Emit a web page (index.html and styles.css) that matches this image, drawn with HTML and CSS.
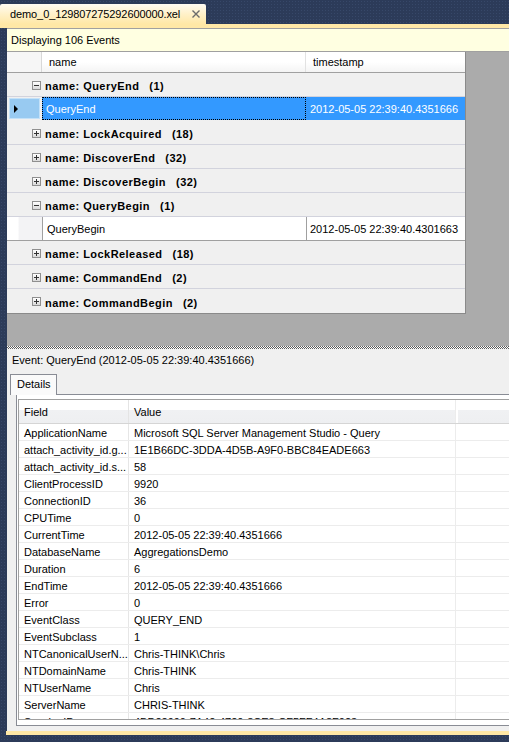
FILE: index.html
```html
<!DOCTYPE html>
<html>
<head>
<meta charset="utf-8">
<link rel="stylesheet" href="styles.css">
</head>
<body>
<div class="tabstrip">
  <div class="doctab">
    <span class="doctab-title">demo_0_129807275292600000.xel</span>
    <svg class="close" viewBox="0 0 8 8" width="8" height="8"><path d="M0.5 0.5 L7.5 7.5 M7.5 0.5 L0.5 7.5" stroke="#6b6b6b" stroke-width="1.4" fill="none"/></svg>
  </div>
</div>
<div class="accent"></div>
<div class="docwell">
  <div class="infobar">Displaying 106 Events</div>
  <div class="upper">
    <div class="eventgrid">
      <div class="ghead"><div class="rh"></div><div class="c-name">name</div><div class="c-ts">timestamp</div></div>
      <div class="group"><span class="exp"></span><span>name: QueryEnd</span><span class="count">(1)</span></div>
      <div class="drow selected"><div class="rh"><span class="rhbox"><span class="arrow"></span></span></div><div class="c-name">QueryEnd</div><div class="c-ts">2012-05-05 22:39:40.4351666</div></div>
      <div class="group"><span class="exp plus"></span><span>name: LockAcquired</span><span class="count">(18)</span></div>
      <div class="group"><span class="exp plus"></span><span>name: DiscoverEnd</span><span class="count">(32)</span></div>
      <div class="group"><span class="exp plus"></span><span>name: DiscoverBegin</span><span class="count">(32)</span></div>
      <div class="group"><span class="exp"></span><span>name: QueryBegin</span><span class="count">(1)</span></div>
      <div class="drow plain"><div class="rh"></div><div class="c-name">QueryBegin</div><div class="c-ts">2012-05-05 22:39:40.4301663</div></div>
      <div class="group"><span class="exp plus"></span><span>name: LockReleased</span><span class="count">(18)</span></div>
      <div class="group"><span class="exp plus"></span><span>name: CommandEnd</span><span class="count">(2)</span></div>
      <div class="group last"><span class="exp plus"></span><span>name: CommandBegin</span><span class="count">(2)</span></div>
    </div>
  </div>
  <div class="splitter"></div>
  <div class="lower">
    <div class="evtitle">Event: QueryEnd (2012-05-05 22:39:40.4351666)</div>
    <div class="tabs"><div class="tab">Details</div></div>
    <div class="tabpage">
      <div class="details">
        <div class="dhead"><div class="f">Field</div><div class="v">Value</div><div class="x"></div></div>
        <div class="dbody">
          <div class="drw"><div class="f">ApplicationName</div><div class="v">Microsoft SQL Server Management Studio - Query</div><div class="x"></div></div>
          <div class="drw"><div class="f">attach_activity_id.g...</div><div class="v">1E1B66DC-3DDA-4D5B-A9F0-BBC84EADE663</div><div class="x"></div></div>
          <div class="drw"><div class="f">attach_activity_id.s...</div><div class="v">58</div><div class="x"></div></div>
          <div class="drw"><div class="f">ClientProcessID</div><div class="v">9920</div><div class="x"></div></div>
          <div class="drw"><div class="f">ConnectionID</div><div class="v">36</div><div class="x"></div></div>
          <div class="drw"><div class="f">CPUTime</div><div class="v">0</div><div class="x"></div></div>
          <div class="drw"><div class="f">CurrentTime</div><div class="v">2012-05-05 22:39:40.4351666</div><div class="x"></div></div>
          <div class="drw"><div class="f">DatabaseName</div><div class="v">AggregationsDemo</div><div class="x"></div></div>
          <div class="drw"><div class="f">Duration</div><div class="v">6</div><div class="x"></div></div>
          <div class="drw"><div class="f">EndTime</div><div class="v">2012-05-05 22:39:40.4351666</div><div class="x"></div></div>
          <div class="drw"><div class="f">Error</div><div class="v">0</div><div class="x"></div></div>
          <div class="drw"><div class="f">EventClass</div><div class="v">QUERY_END</div><div class="x"></div></div>
          <div class="drw"><div class="f">EventSubclass</div><div class="v">1</div><div class="x"></div></div>
          <div class="drw"><div class="f">NTCanonicalUserN...</div><div class="v">Chris-THINK\Chris</div><div class="x"></div></div>
          <div class="drw"><div class="f">NTDomainName</div><div class="v">Chris-THINK</div><div class="x"></div></div>
          <div class="drw"><div class="f">NTUserName</div><div class="v">Chris</div><div class="x"></div></div>
          <div class="drw"><div class="f">ServerName</div><div class="v">CHRIS-THINK</div><div class="x"></div></div>
          <div class="drw"><div class="f">SessionID</div><div class="v">4BD22990-7A42-4720-8CE8-CF5FF4A8F023</div><div class="x"></div></div>
        </div>
      </div>
    </div>
  </div>
</div>
<div class="accent-bottom"></div>
</body>
</html>
```
FILE: styles.css
```css
* { box-sizing: border-box; }
html, body { margin: 0; padding: 0; }
body {
  width: 509px;
  height: 742px;
  overflow: hidden;
  background-color: #2c3b59;
  background-image: radial-gradient(circle, rgba(70, 90, 125, 0.45) 0.6px, transparent 0.8px);
  background-size: 3px 3px;
  font-family: "Liberation Sans", Arial, sans-serif;
  font-size: 11px;
  color: #000;
}

/* document tab */
.tabstrip { height: 24px; padding-top: 4px; }
.doctab {
  width: 206px;
  height: 20px;
  border-radius: 2px 2px 0 0;
  background: linear-gradient(#fffcf3, #fff1c9 50%, #ffe8a6);
  display: flex;
  align-items: center;
  padding-left: 10px;
  font-size: 11px;
  letter-spacing: -0.1px;
}
.doctab-title { flex: 1; }
.close { margin-right: 6px; }
.accent { height: 4px; background: #ffe8a6; }
.accent-bottom { height: 4px; margin-left: 6px; background: #ffe8a6; }

/* document well */
.docwell {
  margin-left: 7px;
  height: 703px;
  display: flex;
  flex-direction: column;
  border-top: 1px solid #a0a0a0;
}
.infobar {
  height: 23px;
  flex: none;
  background: #ffffe1;
  border-bottom: 1px solid #a0a0a0;
  padding-left: 4px;
  line-height: 23px;
}
.upper { height: 294px; flex: none; background: #ababab; }
.eventgrid {
  width: 459px;
  height: 262px;
  border-right: 1px solid #8a8a8a;
  border-bottom: 1px solid #8a8a8a;
  background: #ababab;
}
.ghead {
  display: flex;
  height: 21px;
  background: linear-gradient(#ffffff, #ffffff 50%, #f4f4f4);
  border-bottom: 1px solid #a0a0a0;
  line-height: 20px;
}
.ghead .rh { width: 35px; border-right: 1px solid #d8d8d8; background: #f6f6f6; }
.ghead .c-name { width: 264px; border-right: 1px solid #e2e2e2; padding-left: 7px; }
.ghead .c-ts { flex: 1; padding-left: 7px; }

.group {
  height: 24px;
  background: #f0f0f0;
  border-bottom: 1px solid #d2d3dd;
  display: flex;
  align-items: center;
  padding: 3px 0 0 25px;
  font-weight: bold;
  letter-spacing: 0.45px;
}
.group.last { border-bottom: none; }
.count { margin-left: 10px; }
.exp {
  width: 9px;
  height: 9px;
  border: 1px solid #8f8f8f;
  background: linear-gradient(#ffffff, #d9d9d9);
  margin: -2px 4px 0 0;
  position: relative;
  flex: none;
}
.exp::before {
  content: "";
  position: absolute;
  left: 1px; right: 1px; top: 3px;
  height: 1px;
  background: #333;
}
.exp.plus::after {
  content: "";
  position: absolute;
  top: 1px; bottom: 1px; left: 3px;
  width: 1px;
  background: #333;
}

.drow { height: 24px; display: flex; line-height: 25px; }
.drow .rh { width: 35px; flex: none; }
.drow .c-name { width: 264px; flex: none; padding-left: 4px; }
.drow .c-ts { flex: 1; padding-left: 4px; }

.drow.selected { border-bottom: 1px solid #f0f0f0; background: #f0f0f0; }
.drow.selected .rh { padding: 1px 2px 1px 2px; }
.rhbox {
  display: flex;
  align-items: center;
  height: 100%;
  background: #98caf1;
  border: 1px solid #c4e1f8;
  padding-left: 4px;
}
.arrow {
  width: 0; height: 0;
  border-left: 4px solid #000;
  border-top: 4px solid transparent;
  border-bottom: 4px solid transparent;
}
.drow.selected .c-name {
  background: #3399ff;
  color: #fff;
  outline: 1px dotted #000;
  outline-offset: -1px;
}
.drow.selected .c-ts { background: #3399ff; color: #fff; }

.drow.plain { border-bottom: 1px solid #a0a0a0; }
.drow.plain .rh { background: linear-gradient(90deg, #ffffff 32%, #f3f3f5 34%); }
.drow.plain .c-name { background: #fff; border-left: 1px solid #a0a0a0; }
.drow.plain .c-ts { background: #fff; border-left: 1px solid #a0a0a0; padding-left: 3px; }

.splitter {
  height: 3px;
  flex: none;
  background-color: #fff;
  background-image: repeating-conic-gradient(#5a5a5a 0 25%, #ffffff 0 50%);
  background-size: 2px 2px;
}

/* lower details pane */
.lower { height: 382px; flex: none; background: #f0f0f0; overflow: hidden; }
.evtitle { height: 25px; padding-left: 5px; line-height: 23px; }
.tabs { height: 20px; padding-left: 3px; }
.tab {
  width: 47px;
  height: 21px;
  background: #fafafa;
  border: 1px solid #898c95;
  border-bottom: none;
  line-height: 19px;
  padding-left: 6px;
  position: relative;
  z-index: 1;
}
.tabpage {
  margin-left: 9px;
  width: 600px;
  height: 332px;
  border: 1px solid #898c95;
  background: #fff;
  padding: 4px 0 5px 1px;
}
.details {
  height: 321px;
  border: 1px solid #a0a0a0;
  overflow: hidden;
  display: flex;
  flex-direction: column;
}
.dhead {
  display: flex;
  height: 24px;
  flex: none;
  background: linear-gradient(#ffffff, #ffffff 42%, #f0f1f3 45%, #eeeff1);
  border-bottom: 1px solid #d5d5d5;
  line-height: 24px;
}
.dhead .f { border-right: 1px solid #e4e4e4; }
.dhead .x { border-left: 2px solid #ffffff; }
.dbody { flex: 1; overflow: hidden; }
.drw { display: flex; height: 17px; border-bottom: 1px solid #ececec; line-height: 14px; padding-top: 1px; }
.f { width: 110px; flex: none; padding-left: 5px; border-right: 1px solid #e6e6e6; white-space: nowrap; overflow: hidden; }
.v { width: 327px; flex: none; padding-left: 5px; border-right: 1px solid #ececec; white-space: nowrap; overflow: hidden; }
.x { flex: 1; }
.drw .f, .drw .v { margin-top: -1px; padding-top: 2px; }
```
